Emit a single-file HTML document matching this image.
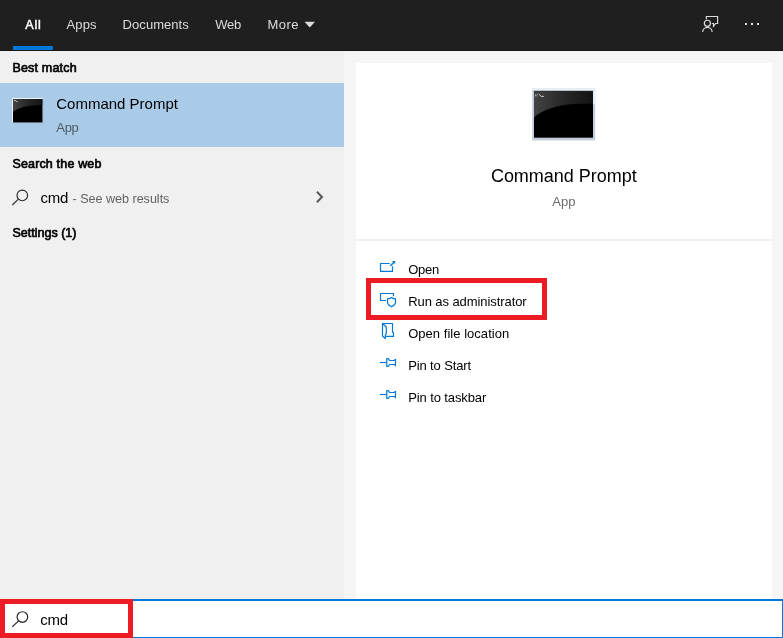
<!DOCTYPE html>
<html lang="en">
<head>
<meta charset="utf-8">
<title>Search - cmd</title>
<style>
html,body{margin:0;padding:0;}
body{width:783px;height:638px;overflow:hidden;position:relative;background:#f5f5f5;font-family:"Liberation Sans",Arial,sans-serif;}
.abs{position:absolute;}
.t{position:absolute;white-space:pre;line-height:1;margin:0;padding:0;}
#header{left:0;top:0;width:783px;height:50px;background:#1f1f1f;}
#hshadow{left:0;top:50px;width:783px;height:1px;background:#151515;}
#tabline{left:13px;top:46px;width:40px;height:4px;background:#0078d7;}
#left{left:0;top:51px;width:344px;height:548px;background:#f0f0f0;}
#sel{left:0;top:83px;width:344px;height:64px;background:#aacbe8;}
#right{left:344px;top:51px;width:439px;height:548px;background:#f5f5f5;}
#card{left:356px;top:63px;width:416px;height:536px;background:#ffffff;}
#divider{left:356px;top:239px;width:416px;height:2px;background:#f0f0f0;}
#search{left:0;top:599px;width:783px;height:39px;background:#ffffff;box-sizing:border-box;border-top:2px solid #0078d7;border-bottom:1px solid #0078d7;border-right:1px solid #0078d7;}
svg{position:absolute;left:0;top:0;overflow:visible;}

#t_all{left:25.20px;top:19px;font-size:12.5px;font-weight:normal;-webkit-text-stroke:0.45px #ffffff;color:#ffffff;letter-spacing:0.897px;}
#t_apps{left:66.50px;top:18px;font-size:13px;font-weight:normal;color:#dcdcdc;letter-spacing:0.120px;}
#t_docs{left:122.60px;top:18px;font-size:13px;font-weight:normal;color:#dcdcdc;letter-spacing:0.056px;}
#t_web{left:215.20px;top:18px;font-size:13px;font-weight:normal;color:#dcdcdc;letter-spacing:-0.200px;}
#t_more{left:267.50px;top:18px;font-size:13px;font-weight:normal;color:#dcdcdc;letter-spacing:0.492px;}
#t_best{left:12.40px;top:62px;font-size:12.5px;font-weight:normal;-webkit-text-stroke:0.65px #000000;color:#000000;letter-spacing:0.185px;}
#t_cpl{left:56.30px;top:96px;font-size:15px;font-weight:normal;color:#000000;letter-spacing:-0.009px;}
#t_appl{left:56.30px;top:121px;font-size:13px;font-weight:normal;color:#4f5b66;letter-spacing:-0.320px;}
#t_stw{left:12.40px;top:158px;font-size:12.5px;font-weight:normal;-webkit-text-stroke:0.65px #000000;color:#000000;letter-spacing:0.165px;}
#t_cmd{left:40.50px;top:190px;font-size:15px;font-weight:normal;color:#000000;letter-spacing:-0.272px;}
#t_see{left:72.60px;top:193px;font-size:12.6px;font-weight:normal;color:#626262;letter-spacing:-0.031px;}
#t_set{left:12.40px;top:227px;font-size:12.5px;font-weight:normal;-webkit-text-stroke:0.65px #000000;color:#000000;letter-spacing:0.016px;}
#t_cpr{left:490.90px;top:167px;font-size:18px;font-weight:normal;color:#000000;letter-spacing:-0.013px;}
#t_appr{left:552.30px;top:195px;font-size:13px;font-weight:normal;color:#6b6b6b;letter-spacing:0.030px;}
#t_open{left:408.20px;top:263px;font-size:13px;font-weight:normal;color:#000000;letter-spacing:-0.271px;}
#t_run{left:408.20px;top:295px;font-size:13px;font-weight:normal;color:#000000;letter-spacing:-0.076px;}
#t_ofl{left:408.20px;top:327px;font-size:13px;font-weight:normal;color:#000000;letter-spacing:0.032px;}
#t_pts{left:408.20px;top:359px;font-size:13px;font-weight:normal;color:#000000;letter-spacing:-0.128px;}
#t_ptt{left:408.20px;top:391px;font-size:13px;font-weight:normal;color:#000000;letter-spacing:-0.108px;}
#t_cmdb{left:40.30px;top:612px;font-size:15px;font-weight:normal;color:#000000;letter-spacing:-0.322px;}
</style>
</head>
<body>


<div class="abs" id="header"></div>
<div class="abs" id="hshadow"></div>
<div class="abs" id="tabline"></div>
<div class="abs" id="left"></div>
<div class="abs" id="sel"></div>
<div class="abs" id="right"></div>
<div class="abs" id="card"></div>
<div class="abs" id="divider"></div>
<div class="abs" id="search"></div>
<div id="texts" style="position:absolute;left:0;top:0;width:783px;height:638px;will-change:transform;">
<nav>
<span class="t" id="t_all">All</span>
<span class="t" id="t_apps">Apps</span>
<span class="t" id="t_docs">Documents</span>
<span class="t" id="t_web">Web</span>
<span class="t" id="t_more">More</span>
</nav>
<section>
<span class="t" id="t_best">Best match</span>
<span class="t" id="t_cpl">Command Prompt</span>
<span class="t" id="t_appl">App</span>
<span class="t" id="t_stw">Search the web</span>
<span class="t" id="t_cmd">cmd</span>
<span class="t" id="t_see">- See web results</span>
<span class="t" id="t_set">Settings (1)</span>
</section>
<section>
<span class="t" id="t_cpr">Command Prompt</span>
<span class="t" id="t_appr">App</span>
<span class="t" id="t_open">Open</span>
<span class="t" id="t_run">Run as administrator</span>
<span class="t" id="t_ofl">Open file location</span>
<span class="t" id="t_pts">Pin to Start</span>
<span class="t" id="t_ptt">Pin to taskbar</span>
</section>
<span class="t" id="t_cmdb">cmd</span>
</div>

<svg width="783" height="638" viewBox="0 0 783 638">
  <defs>
    <linearGradient id="gl" x1="0" y1="0" x2="1" y2="0">
      <stop offset="0" stop-color="#434343"/>
      <stop offset="0.5" stop-color="#272727"/>
      <stop offset="1" stop-color="#131313"/>
    </linearGradient>
    <g id="pin" fill="none" stroke="#0078d7" stroke-width="1.2" stroke-linejoin="round" stroke-linecap="butt">
      <path d="M380 362.5 H386.6"/>
      <path d="M386.8 358.6 H388.3 L389.6 360.5 H394 L395.5 359.4 V365.6 L394 364.5 H389.6 L388.3 366.4 H386.8 Z"/>
    </g>
  </defs>

  <!-- More caret -->
  <path d="M304.5 21.7 H315 L309.75 27.4 Z" fill="#dcdcdc"/>

  <!-- feedback icon -->
  <g fill="none" stroke="#dadada" stroke-width="1.2">
    <path d="M706.4 19.2 V16.5 H717.6 V23.5 H715.6 L713.5 26.3 V23.5 H711.8"/>
    <circle cx="707.4" cy="23.3" r="3.05"/>
    <path d="M702.7 32 A4.7 4.7 0 0 1 712.1 32"/>
  </g>
  <!-- ellipsis -->
  <g fill="#e6e6e6">
    <rect x="745" y="23" width="2" height="2"/>
    <rect x="751" y="23" width="2" height="2"/>
    <rect x="757" y="23" width="2" height="2"/>
  </g>

  <!-- small cmd icon -->
  <g>
    <rect x="12" y="98" width="31.2" height="25.1" fill="#8ea3bb"/>
    <path d="M12 98 H43.2 V99 H13 V122.6 H12 Z" fill="#eef1f5"/>
    <rect x="13" y="99" width="29.3" height="23.3" fill="#000"/>
    <path d="M13 99 H42.3 V105 C34 105.2 27 105.8 22 107.6 C18 109 15 110.4 13 111.8 Z" fill="url(#gl)"/>
    <path d="M14.2 100.6 h1.2 l1.2 1 h0.8" stroke="#e0e0e0" stroke-width="1" fill="none"/>
  </g>

  <!-- large cmd icon -->
  <g>
    <rect x="532.2" y="140" width="63" height="0.8" fill="#e3e6ec"/>
    <rect x="532.2" y="88.2" width="63" height="51.8" fill="#c3ccdd"/>
    <rect x="532.2" y="88.2" width="63" height="2.2" fill="#eef1f6"/>
    <rect x="533.5" y="90.3" width="60" height="1" fill="#a9b2c2"/>
    <rect x="593" y="90.4" width="2.2" height="14" fill="#e9edf4"/>
    <rect x="534" y="91.2" width="59" height="46.5" fill="#000"/>
    <path d="M534 91.2 H593 V103.6 L575 104 C558 104.6 542 110 534 117.6 Z" fill="url(#gl)"/>
    <path d="M535.8 94.4 v2 m1.6 -1.8 v0.4 m0 0.8 v0.4 m1.4 -2 l2.4 2.2 h2.6" stroke="#cfcfcf" stroke-width="1" fill="none"/>
  </g>

  <!-- search icon (results) -->
  <g fill="none" stroke="#2b2b2b" stroke-width="1.15">
    <circle cx="22.3" cy="195.4" r="5.3"/>
    <path d="M18.4 199.2 L12.3 205"/>
  </g>
  <!-- chevron -->
  <path d="M316.9 191.8 L322 197.05 L316.9 202.3" fill="none" stroke="#5a5a5a" stroke-width="2"/>

  <!-- search icon (bottom) -->
  <g fill="none" stroke="#1f1f1f" stroke-width="1.15">
    <circle cx="22.4" cy="617" r="5.3"/>
    <path d="M18.5 620.8 L12.3 626.8"/>
  </g>

  <!-- action icons -->
  <g fill="none" stroke="#0078d7" stroke-width="1.2" stroke-linejoin="round">
    <!-- open -->
    <path d="M389.7 263.5 H380.5 V271.4 H392.5 V266.2"/>
    <path d="M390.2 266 L394 262.2" stroke-width="1.3"/>
    <path d="M392 260.9 H395.1 V264 Z" fill="#0078d7" stroke="none"/>
    <!-- run as admin -->
    <path d="M386 300.5 H380.5 V293.5 H393.5 V296.2"/>
    <path d="M391.5 297.5 C390.2 298.5 388.8 298.9 387.5 298.9 V302 C387.5 304 389.4 305.8 391.5 306.6 C393.6 305.8 395.5 304 395.5 302 V298.9 C394.2 298.9 392.8 298.5 391.5 297.5 Z"/>
    <!-- open file location -->
    <path d="M382.5 323.5 H392.5 V332 L393.5 333 V336.4 H385.8"/>
    <path d="M382.5 323.5 V336 L385.3 338.6 V335 L386.3 333.6 V327 Z"/>
  </g>
  <use href="#pin"/>
  <use href="#pin" y="32"/>

  <!-- red highlight boxes -->
  <rect x="368.5" y="280.5" width="176" height="37" fill="none" stroke="#ed1c24" stroke-width="5"/>
  <rect x="2.5" y="601.5" width="128" height="34" fill="none" stroke="#ed1c24" stroke-width="5"/>
</svg>


</body>
</html>
